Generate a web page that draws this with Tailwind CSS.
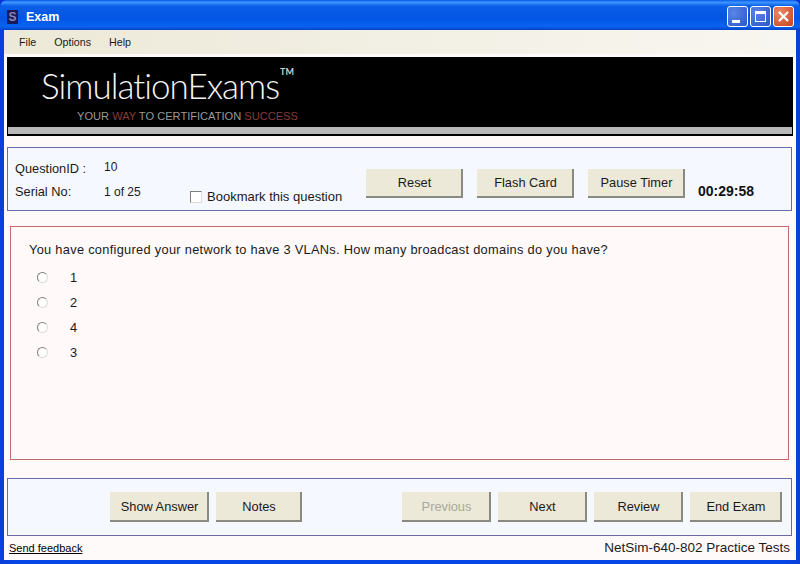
<!DOCTYPE html>
<html lang="en">
<head>
<meta charset="UTF-8">
<title>Exam</title>
<script src="https://cdn.jsdelivr.net/npm/@tailwindcss/browser@4"></script>
</head>
<body class="w-[800px] h-[564px] overflow-hidden bg-[#0831d9] font-['Liberation_Sans',Arial,sans-serif] text-[#1a1a1a]">
<div class="w-[800px] h-[564px] flex flex-col rounded-t-[7px] overflow-hidden bg-[linear-gradient(to_right,#0a3fd8,#0746e6_2%,#0746e6_98%,#0a3fd8)]">

	<!-- title bar -->
	<div class="h-[30px] shrink-0 flex items-center pt-[3px] pl-[7px] pr-[6px] bg-[linear-gradient(to_bottom,#0a5ce8_0%,#3d95ff_8%,#0a5fe8_20%,#0355e4_60%,#0a62f0_88%,#0344c8_100%)]">
		<div class="w-[11px] h-[14px] mt-[1px] bg-[#1a1a58] text-[#8888b0] text-[12px] leading-[14px] font-bold text-center">S</div>
		<span class="ml-[8px] mt-[2px] text-white text-[12.5px] font-bold">Exam</span>
		<div class="ml-auto flex gap-[2px]">
			<div class="w-[21px] h-[21px] rounded-[3px] border border-white bg-[radial-gradient(circle_at_30%_30%,#5a86e8,#2a55c8)] relative">
				<div class="absolute left-[4px] bottom-[3px] w-[8px] h-[3px] bg-white"></div>
			</div>
			<div class="w-[21px] h-[21px] rounded-[3px] border border-white bg-[radial-gradient(circle_at_30%_30%,#5a86e8,#2a55c8)] flex items-center justify-center">
				<div class="w-[11px] h-[11px] border border-white border-t-[3px]"></div>
			</div>
			<div class="w-[21px] h-[21px] rounded-[3px] border border-white bg-[radial-gradient(circle_at_30%_30%,#ec8a6a,#c8401c)] flex items-center justify-center">
				<svg width="13" height="13" viewBox="0 0 13 13"><path d="M2 2L11 11M11 2L2 11" stroke="#fff" stroke-width="2.2"/></svg>
			</div>
		</div>
	</div>

	<!-- client area -->
	<div class="mx-[4px] h-[530px] flex flex-col bg-[#fffafa]">
		<div class="h-[24px] shrink-0 flex items-center gap-[18px] pl-[15px] pt-[1px] text-[10.7px] bg-[linear-gradient(to_right,#ece9d8,#f8f6f0)]">
			<span>File</span><span>Options</span><span>Help</span>
		</div>

		<!-- banner -->
		<div class="mt-[3px] ml-[3px] mr-[3px] h-[79px] shrink-0 bg-black flex flex-col">
			<div class="h-[70px] relative pl-[34px]">
				<div class="text-[#f4f4f4] text-[35px] font-['Lato',sans-serif] font-light leading-[42px] pt-[7px] tracking-[-1px] whitespace-nowrap">SimulationExams<sup class="text-[9px] font-bold align-[20px] text-[#ccc] ml-[1px] tracking-normal">TM</sup></div>
				<div class="absolute left-[70px] top-[51px] text-[11.1px] text-[#9a9a9a] whitespace-nowrap">YOUR <span class="text-[#8a3a3a]">WAY</span> TO CERTIFICATION <span class="text-[#8a3a3a]">SUCCESS</span></div>
			</div>
			<div class="h-[7px] mx-[1px] bg-[#b8b8b8]"></div>
			<div class="h-[2px]"></div>
		</div>

		<!-- question info panel -->
		<div class="mt-[11px] ml-[3px] mr-[4px] h-[64px] shrink-0 border border-[#6a6aa8] bg-[#f6f8ff] flex items-start relative">
			<div class="w-[88px] pl-[7px] pt-[13px] flex flex-col gap-[7px] text-[12.8px]">
				<span class="leading-[16px]">QuestionID :</span>
				<span class="leading-[16px]">Serial No:</span>
			</div>
			<div class="w-[86px] pl-[8px] pt-[11px] flex flex-col gap-[9px] text-[12px]">
				<span class="leading-[16px]">10</span>
				<span class="leading-[16px]">1 of 25</span>
			</div>
			<div class="flex items-center pt-[41px] text-[13px] w-[183px]">
				<div class="ml-[8px] w-[12px] h-[12px] border border-[#dcdcd4] border-t-[#808078] border-l-[#808078] bg-white"></div>
				<span class="ml-[5px] whitespace-nowrap leading-[16px]">Bookmark this question</span>
			</div>
			<div class="flex gap-[14px] pt-[21px] ml-[1px] text-[12.8px]">
				<button class="w-[97px] h-[29px] pl-[2px] pt-[1px] bg-[#ece9d8] border-r-2 border-b-2 border-[#8a8a80]">Reset</button>
				<button class="w-[97px] h-[29px] pl-[2px] pt-[1px] bg-[#ece9d8] border-r-2 border-b-2 border-[#8a8a80]">Flash Card</button>
				<button class="w-[97px] h-[29px] pl-[2px] pt-[1px] bg-[#ece9d8] border-r-2 border-b-2 border-[#8a8a80]">Pause Timer</button>
			</div>
			<span class="ml-[13px] pt-[35px] leading-[16px] font-bold text-[14px] text-[#111]">00:29:58</span>
		</div>

		<!-- question panel -->
		<div class="mt-[15px] ml-[6px] mr-[7px] h-[234px] shrink-0 border border-[#c46a6a] bg-[#fff9f9] pl-[18px] pt-[15px] text-[12.8px]">
			<p class="leading-[16px] tracking-[0.3px] whitespace-nowrap">You have configured your network to have 3 VLANs. How many broadcast domains do you have?</p>
			<div class="mt-[7px] flex flex-col">
				<div class="h-[25px] flex items-center"><div class="ml-[8px] w-[11px] h-[11px] rounded-full border border-[#dcdcd4] border-t-[#808078] border-l-[#808078] bg-white"></div><span class="ml-[22px]">1</span></div>
				<div class="h-[25px] flex items-center"><div class="ml-[8px] w-[11px] h-[11px] rounded-full border border-[#dcdcd4] border-t-[#808078] border-l-[#808078] bg-white"></div><span class="ml-[22px]">2</span></div>
				<div class="h-[25px] flex items-center"><div class="ml-[8px] w-[11px] h-[11px] rounded-full border border-[#dcdcd4] border-t-[#808078] border-l-[#808078] bg-white"></div><span class="ml-[22px]">4</span></div>
				<div class="h-[25px] flex items-center"><div class="ml-[8px] w-[11px] h-[11px] rounded-full border border-[#dcdcd4] border-t-[#808078] border-l-[#808078] bg-white"></div><span class="ml-[22px]">3</span></div>
			</div>
		</div>

		<!-- navigation panel -->
		<div class="mt-[18px] ml-[3px] mr-[4px] h-[58px] shrink-0 border border-[#6a6aa8] bg-[#f6f8ff] flex items-start pt-[13px] pl-[102px] text-[12.8px]">
			<button class="w-[99px] h-[30px] pl-[2px] pt-[1px] bg-[#ece9d8] border-r-2 border-b-2 border-[#8a8a80]">Show Answer</button>
			<button class="ml-[7px] w-[86px] h-[30px] pl-[2px] pt-[1px] bg-[#ece9d8] border-r-2 border-b-2 border-[#8a8a80]">Notes</button>
			<button class="ml-[100px] w-[89px] h-[30px] pl-[2px] pt-[1px] bg-[#ece9d8] text-[#a8a8a0] border-r-2 border-b-2 border-[#8a8a80]">Previous</button>
			<button class="ml-[7px] w-[89px] h-[30px] pl-[2px] pt-[1px] bg-[#ece9d8] border-r-2 border-b-2 border-[#8a8a80]">Next</button>
			<button class="ml-[7px] w-[89px] h-[30px] pl-[2px] pt-[1px] bg-[#ece9d8] border-r-2 border-b-2 border-[#8a8a80]">Review</button>
			<button class="ml-[7px] w-[92px] h-[30px] pl-[2px] pt-[1px] bg-[#ece9d8] border-r-2 border-b-2 border-[#8a8a80]">End Exam</button>
		</div>

		<!-- footer -->
		<div class="flex-1 flex items-center justify-between pl-[5px] pr-[6px]">
			<a class="underline text-[11px] text-black">Send feedback</a>
			<span class="text-[13.5px]">NetSim-640-802 Practice Tests</span>
		</div>
	</div>
</div>
</body>
</html>
